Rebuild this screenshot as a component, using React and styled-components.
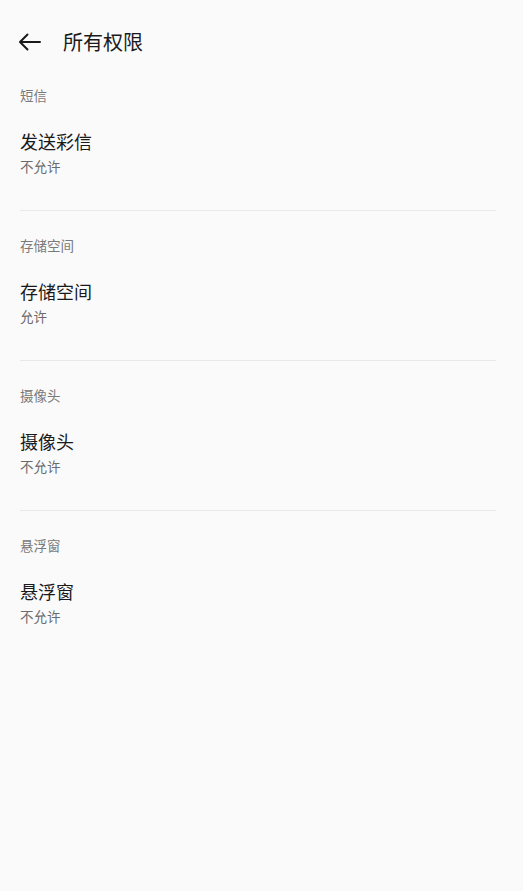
import React from "react";
import styled, { createGlobalStyle } from "styled-components";

const Global = createGlobalStyle`
  html, body { margin: 0; padding: 0; background: #fafafa; }
  body { font-family: "Noto Sans CJK SC", "Noto Sans", sans-serif; }
`;

const Page = styled.div`
  width: 523px;
  min-height: 891px;
  background: #fafafa;
  display: flex;
  flex-direction: column;
`;

const Header = styled.header`
  display: flex;
  align-items: center;
  height: 70px;
  padding-top: 7px;
  padding-left: 18px;
  gap: 22px;
`;

const BackButton = styled.button`
  border: 0;
  background: none;
  padding: 0;
  width: 23px;
  height: 23px;
  display: flex;
  align-items: center;
  justify-content: center;
  cursor: pointer;
`;

const Title = styled.h1`
  margin: 0;
  font-size: 20px;
  font-weight: 400;
  color: #1a1a1a;
  line-height: 28px;
`;

const Section = styled.section`
  display: flex;
  flex-direction: column;
  margin-bottom: 16px;
`;

const Label = styled.div`
  height: 36px;
  line-height: 36px;
  padding-left: 20px;
  font-size: 13.5px;
  color: #7a7a7a;
`;

const Item = styled.div`
  display: flex;
  flex-direction: column;
  gap: 3px;
  padding: 16px 20px 34px;
`;

const ItemTitle = styled.div`
  font-size: 18px;
  line-height: 24px;
  color: #1a1a1a;
`;

const ItemSub = styled.div`
  font-size: 13.5px;
  line-height: 20px;
  color: #6b6b6b;
`;

const Divider = styled.hr`
  margin: 0 27px 0 20px;
  border: 0;
  height: 1px;
  background: #e9e9e9;
`;

const data = [
  { label: "短信", title: "发送彩信", status: "不允许" },
  { label: "存储空间", title: "存储空间", status: "允许" },
  { label: "摄像头", title: "摄像头", status: "不允许" },
  { label: "悬浮窗", title: "悬浮窗", status: "不允许" },
];

export default function App() {
  return (
    <Page>
      <Global />
      <Header>
        <BackButton aria-label="返回">
          <svg width="23" height="18" viewBox="0 0 23 18" fill="none">
            <path d="M22 9H2M9.5 1.5L2 9l7.5 7.5" stroke="#1a1a1a" strokeWidth="2" strokeLinecap="round" strokeLinejoin="round" />
          </svg>
        </BackButton>
        <Title>所有权限</Title>
      </Header>
      {data.map((d, i) => (
        <Section key={i}>
          <Label>{d.label}</Label>
          <Item>
            <ItemTitle>{d.title}</ItemTitle>
            <ItemSub>{d.status}</ItemSub>
          </Item>
          {i < data.length - 1 && <Divider />}
        </Section>
      ))}
    </Page>
  );
}
